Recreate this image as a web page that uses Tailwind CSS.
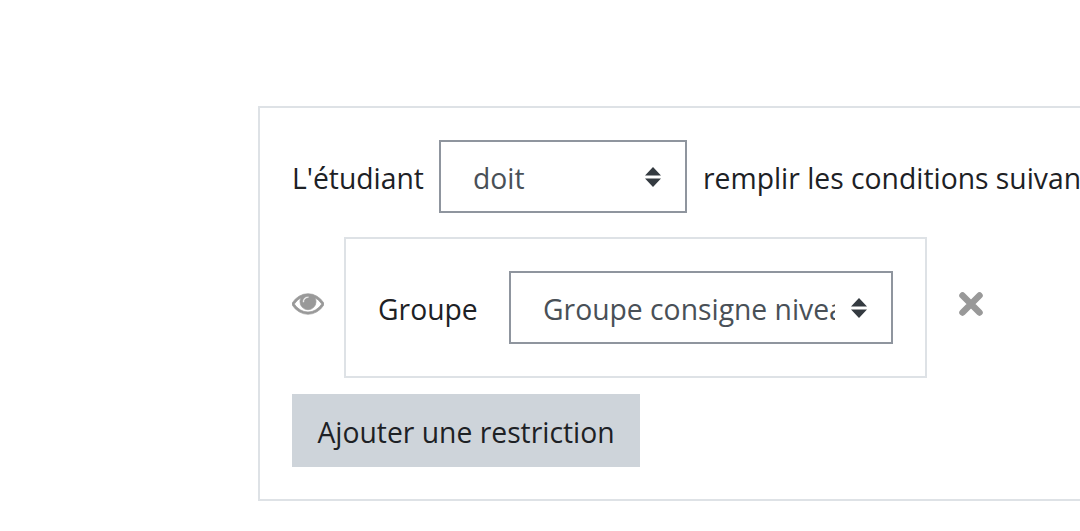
<!DOCTYPE html>
<html lang="fr">
  <head>
    <meta charset="UTF-8" />
    <title>Restrictions</title>
    <script src="https://cdn.jsdelivr.net/npm/@tailwindcss/browser@4"></script>
  </head>
  <body class="h-[531px] w-[1080px] overflow-hidden bg-white font-['Open_Sans',sans-serif] text-[28.3px] text-[#1d2125]">
    <div class="ml-[258px] mt-[106px] flex w-[1000px] flex-col border-2 border-[#dee2e6] p-8">
      <div class="flex h-[73px] items-center whitespace-nowrap">
        <span class="w-[131px] pt-1">L'étudiant</span>
        <div class="ml-4 flex h-[73px] w-[248px] items-center justify-between border-2 border-[#8f959e] pl-8 pr-6 text-[#495057]">
          <span class="pt-1">doit</span>
          <svg class="h-[20px] w-[16px]" viewBox="0 0 16 20"><path fill="#343a40" d="M8 0l8 8.500H0zM0 11.500h16L8 20z" /></svg>
        </div>
        <span class="ml-4 pt-1">remplir les conditions suivantes</span>
      </div>
      <div class="mt-6 flex items-center">
        <svg class="mb-2 h-8 w-8" viewBox="0 64 1792 1792">
          <path fill="#999" stroke="#999" stroke-width="40" d="M1664 960q-152-236-381-353 61 104 61 225 0 185-131.500 316.500t-316.500 131.500-316.500-131.500-131.500-316.500q0-121 61-225-229 117-381 353 133 205 333.500 326.500t434.500 121.500 434.500-121.500 333.500-326.500zm-720-384q0-20-14-34t-34-14q-125 0-214.500 89.500t-89.500 214.500q0 20 14 34t34 14 34-14 14-34q0-86 61-147t147-61q20 0 34-14t14-34zm848 384q0 34-20 69-140 230-376.500 368.500t-499.500 138.500-499.500-139-376.500-368q-20-35-20-69t20-69q140-229 376.500-368t499.500-139 499.500 139 376.500 368q20 35 20 69z" />
        </svg>
        <div class="ml-5 flex h-[141px] w-[583px] items-center border-2 border-[#dee2e6] px-8">
          <span class="w-[99px] pt-1">Groupe</span>
          <div class="ml-8 flex h-[73px] w-[384px] items-center border-2 border-[#8f959e] pl-8 pr-6 text-[#495057]">
            <span class="w-[292px] overflow-hidden whitespace-nowrap pt-1">Groupe consigne niveau 1</span>
            <svg class="ml-auto h-[20px] w-[16px]" viewBox="0 0 16 20"><path fill="#343a40" d="M8 0l8 8.500H0zM0 11.500h16L8 20z" /></svg>
          </div>
        </div>
        <svg class="mb-2 ml-8 h-6 w-6" viewBox="0 0 24 24">
          <path fill="none" stroke="#999" stroke-width="6.500" stroke-linecap="round" d="M3.500 3.500l17 17M20.500 3.500l-17 17" />
        </svg>
      </div>
      <button class="mt-4 flex h-[73px] w-[348px] items-center justify-center bg-[#ced4da] pt-1">Ajouter une restriction</button>
    </div>
  </body>
</html>
